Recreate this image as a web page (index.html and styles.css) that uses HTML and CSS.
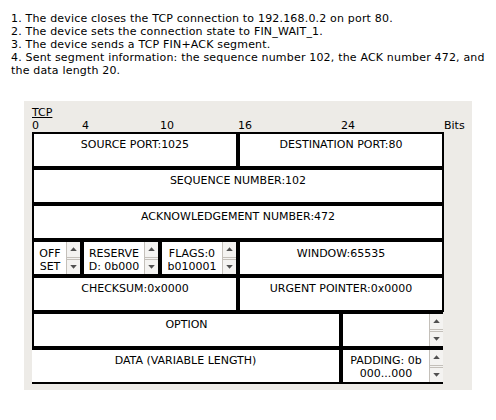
FILE: index.html
```html
<!DOCTYPE html>
<html>
<head>
<meta charset="utf-8">
<link rel="stylesheet" href="styles.css">
</head>
<body>
<div class="desc">
  <div>1. The device closes the TCP connection to 192.168.0.2 on port 80.</div>
  <div>2. The device sets the connection state to FIN_WAIT_1.</div>
  <div>3. The device sends a TCP FIN+ACK segment.</div>
  <div>4. Sent segment information: the sequence number 102, the ACK number 472, and the data length 20.</div>
</div>
<div class="panel">
  <div class="title">TCP</div>
  <div class="scale">
    <span>0</span><span>4</span><span>10</span><span>16</span><span>24</span><span>Bits</span>
  </div>
  <div class="fields">
    <div class="cell span-a">SOURCE PORT:1025</div>
    <div class="cell span-b">DESTINATION PORT:80</div>
    <div class="cell span-full">SEQUENCE NUMBER:102</div>
    <div class="cell span-full">ACKNOWLEDGEMENT NUMBER:472</div>
    <div class="cell split">
      <div class="txt"><div>OFF</div><div>SET</div></div>
      <div class="spin"><div class="up"></div><div class="dn"></div></div>
    </div>
    <div class="cell split">
      <div class="txt"><div>RESERVE</div><div>D: 0b000</div></div>
      <div class="spin"><div class="up"></div><div class="dn"></div></div>
    </div>
    <div class="cell split">
      <div class="txt"><div>FLAGS:0</div><div>b010001</div></div>
      <div class="spin"><div class="up"></div><div class="dn"></div></div>
    </div>
    <div class="cell span-b row4">WINDOW:65535</div>
    <div class="cell span-a">CHECKSUM:0x0000</div>
    <div class="cell span-b">URGENT POINTER:0x0000</div>
    <div class="cell span-c">OPTION</div>
    <div class="cell split open-right">
      <div class="txt"></div>
      <div class="spin wide"><div class="up"></div><div class="dn"></div></div>
    </div>
    <div class="cell span-c open-left">DATA (VARIABLE LENGTH)</div>
    <div class="cell split open-right">
      <div class="txt pad"><div>PADDING: 0b</div><div>000...000</div></div>
      <div class="spin wide"><div class="up"></div><div class="dn"></div></div>
    </div>
  </div>
</div>
</body>
</html>
```
FILE: styles.css
```css
body {
  margin: 0;
  background: #ffffff;
  color: #000000;
  font-family: "DejaVu Sans", sans-serif;
  font-size: 11px;
}

.desc {
  padding: 12px 0 0 11px;
  width: 481px;
  line-height: 13px;
  letter-spacing: 0.18px;
}

.panel {
  margin: 24px 0 0 24px;
  width: 448px;
  height: 289px;
  box-sizing: border-box;
  padding: 6px 0 0 8px;
  background: #edebe7;
}

.title {
  line-height: 12px;
  text-decoration: underline;
}

.scale {
  display: grid;
  grid-template-columns: 50px 78px 78px 103px 103px auto;
  line-height: 13px;
}

.fields {
  display: grid;
  grid-template-columns: 50px 78px 78px 103px 103px;
  grid-auto-rows: 36px;
  width: 412px;
}

.cell {
  box-sizing: border-box;
  border: 2px solid #000000;
  background: #ffffff;
  text-align: center;
  padding-top: 4px;
  line-height: 13px;
  white-space: nowrap;
}

.span-a { grid-column: 1 / 4; }
.span-b { grid-column: 4 / 6; }
.span-c { grid-column: 1 / 5; }
.span-full { grid-column: 1 / 6; }
.row4 { padding-top: 5px; }

.split {
  display: flex;
  padding-top: 0;
}

.split .txt {
  flex: 1;
  padding-top: 5px;
}

.split .txt.pad {
  padding-top: 4px;
}

.open-right {
  border-right: none;
  margin-right: 1px;
}

.open-left {
  border-left: none;
}

.spin {
  width: 13px;
  display: flex;
  flex-direction: column;
  background: #f4f3f1;
  border-left: 1px solid #c4c0ba;
}

.spin.wide {
  width: 13px;
}

.spin .up,
.spin .dn {
  flex: 1;
  display: flex;
  align-items: center;
  justify-content: center;
}

.spin .up {
  border-bottom: 1px solid #c4c0ba;
}

.spin .dn {
  margin-top: 1px;
  border-top: 1px solid #c4c0ba;
}

.spin .up::before,
.spin .dn::before {
  content: "";
  width: 7px;
  height: 4px;
  background: #505050;
}

.spin .up::before {
  clip-path: polygon(50% 0, 100% 100%, 0 100%);
}

.spin .dn::before {
  clip-path: polygon(0 0, 100% 0, 50% 100%);
}
```
